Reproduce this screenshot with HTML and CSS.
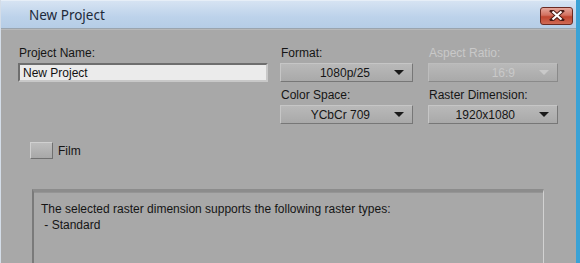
FILE: index.html
```html
<!DOCTYPE html>
<html lang="en">
<head>
    <meta charset="UTF-8">
    <title>New Project</title>
    <link rel="stylesheet" href="styles.css">
</head>
<body>
    <div class="window">
        <div class="titlebar">
            <span class="title">New Project</span>
            <button class="close-btn" aria-label="Close">
                <svg width="16" height="11" viewBox="0 0 16 11">
                    <path d="M3 1 L13 10 M13 1 L3 10" stroke="#4a1a14" stroke-width="4" stroke-linecap="square"/>
                    <path d="M3.5 1.5 L12.5 9.5 M12.5 1.5 L3.5 9.5" stroke="#fff" stroke-width="2.2"/>
                </svg>
            </button>
        </div>
        <div class="body">
            <div class="form-grid">
                <div class="field name-field">
                    <label class="label">Project Name:</label>
                    <input class="text-input" type="text" value="New Project">
                </div>
                <div class="field">
                    <label class="label">Format:</label>
                    <div class="select"><span class="select-value">1080p/25</span><span class="arrow"></span></div>
                </div>
                <div class="field">
                    <label class="label disabled">Aspect Ratio:</label>
                    <div class="select is-disabled"><span class="select-value">16:9</span><span class="arrow"></span></div>
                </div>
                <div class="field col-2">
                    <label class="label">Color Space:</label>
                    <div class="select"><span class="select-value">YCbCr 709</span><span class="arrow"></span></div>
                </div>
                <div class="field">
                    <label class="label">Raster Dimension:</label>
                    <div class="select"><span class="select-value">1920x1080</span><span class="arrow"></span></div>
                </div>
            </div>

            <div class="film-row">
                <span class="toggle"></span>
                <span class="film-label">Film</span>
            </div>

            <div class="info-box">
                <p>The selected raster dimension supports the following raster types:</p>
                <p>&nbsp;- Standard</p>
            </div>
        </div>
    </div>
</body>
</html>
```

FILE: styles.css
```css
/* New Project dialog */
body {
    margin: 0;
    width: 580px;
    height: 263px;
    overflow: hidden;
    font-family: "Liberation Sans", Arial, sans-serif;
    font-size: 12px;
    color: #151515;
    background-color: #a8a8a8;
}

.window {
    width: 580px;
    height: 263px;
    display: flex;
    flex-direction: column;
    box-sizing: border-box;
    border-left: 1px solid #d4dde8;
    border-right: 4px solid #3aa2d6;
    box-shadow: inset -1px 0 0 #8fb6d0;
}

.titlebar {
    height: 27px;
    flex: none;
    display: flex;
    align-items: center;
    justify-content: space-between;
    padding: 0 3px 0 28px;
    background: linear-gradient(#d6e3f2, #bcd2ea 60%, #b6cde6);
    border-top: 1px solid #e6eef7;
    border-bottom: 1px solid #9aa4ae;
}

.title {
    font-family: "Noto Sans", "Open Sans", sans-serif;
    font-size: 13.5px;
    color: #1e2a3a;
    padding-top: 1px;
}

.close-btn {
    width: 33px;
    height: 18px;
    margin-top: 2px;
    padding: 0;
    display: flex;
    align-items: center;
    justify-content: center;
    border: 1px solid #6b2a22;
    border-radius: 3px;
    background: linear-gradient(#e6a79c, #d2705f 45%, #c0452f 55%, #d06a55);
}

.body {
    flex: 1;
    min-height: 0;
    display: flex;
    flex-direction: column;
    padding: 16px 0 0 17px;
    background-color: #a8a8a8;
    border-top: 1px solid #b8b8b8;
}

.form-grid {
    display: grid;
    grid-template-columns: 250px 133px 133px;
    column-gap: 12px;
    row-gap: 6px;
}

.form-grid .field:nth-child(3),
.form-grid .field:nth-child(5) {
    margin-left: 3px;
}

.col-2 {
    grid-column: 2;
}

.field {
    display: flex;
    flex-direction: column;
}

.label {
    height: 14px;
    line-height: 14px;
    margin: 0 0 3px 1px;
}

.label.disabled {
    color: #c9c9c9;
}

.text-input {
    height: 19px;
    box-sizing: border-box;
    margin: 0;
    padding: 0 0 0 3px;
    font-family: inherit;
    font-size: 12px;
    color: #111;
    background-color: #ebebeb;
    border: 2px solid;
    border-color: #6e6e6e #c8c8c8 #c8c8c8 #6e6e6e;
    outline: none;
}

.select {
    height: 19px;
    box-sizing: border-box;
    display: flex;
    align-items: center;
    justify-content: flex-end;
    padding-right: 8px;
    background: linear-gradient(#b9b9b9, #a9a9a9);
    border: 1px solid;
    border-color: #c6c6c6 #777 #777 #c6c6c6;
}

.select-value {
    flex: 1;
    text-align: right;
    padding-right: 24px;
}

.arrow {
    width: 0;
    height: 0;
    border-left: 5px solid transparent;
    border-right: 5px solid transparent;
    border-top: 5px solid #1a1a1a;
}

.select.is-disabled .select-value {
    color: #c9c9c9;
}

.select.is-disabled .arrow {
    border-top-color: #c9c9c9;
}

.select.is-disabled {
    border-color: #bdbdbd #8a8a8a #8a8a8a #bdbdbd;
}

.film-row {
    display: flex;
    align-items: center;
    margin: 18px 0 0 12px;
}

.toggle {
    width: 23px;
    height: 17px;
    box-sizing: border-box;
    background: linear-gradient(#bdbdbd, #a8a8a8);
    border: 1px solid;
    border-color: #d0d0d0 #707070 #707070 #d0d0d0;
}

.film-label {
    margin-left: 5px;
}

.info-box {
    flex: 1;
    width: 512px;
    box-sizing: border-box;
    margin: 30px 0 0 14px;
    padding: 9px 7px;
    border-top: 3px solid #8c8c8c;
    border-left: 2px solid #7a7a7a;
    border-right: 1px solid #d2d2d2;
    background-color: #a8a8a8;
    box-shadow: inset 0 1px 0 #959595;
}

.info-box p {
    margin: 0;
    line-height: 16px;
}
```
